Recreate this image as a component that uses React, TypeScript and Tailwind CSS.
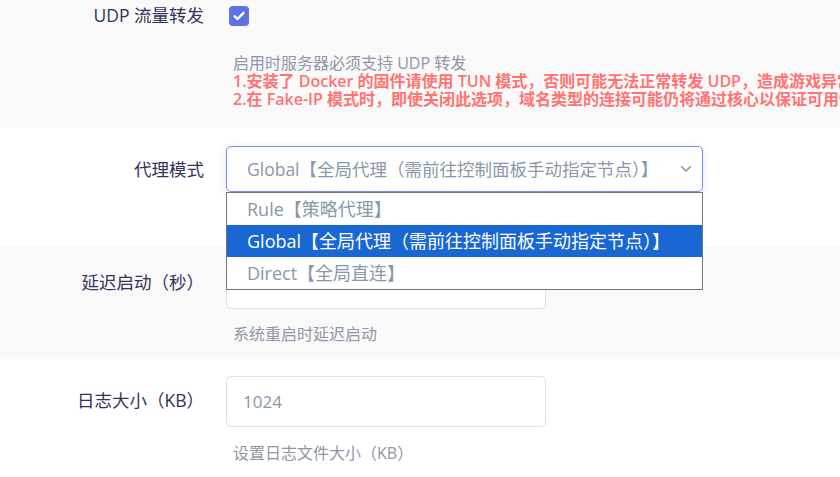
import React from "react";

const font = { fontFamily: '"Open Sans", "Noto Sans CJK SC", sans-serif' };

function Label({ children, top }: { children: React.ReactNode; top: string }) {
  return (
    <div className={`w-[204px] shrink-0 text-right text-[17.5px] leading-[20px] text-[#32325d] whitespace-nowrap ${top}`}>
      {children}
    </div>
  );
}

export default function App() {
  return (
    <div className="w-[840px] h-[477px] overflow-hidden bg-white" style={font}>
      {/* Row 1 */}
      <div className="h-[128px] bg-[#f9f9f9] flex">
        <Label top="pt-[5px]">UDP 流量转发</Label>
        <div className="ml-[25px] flex flex-col min-w-0">
          <div className="mt-[6px] w-[20px] h-[20px] rounded-[4px] bg-[#5e72e4] flex items-center justify-center">
            <svg width="12" height="10" viewBox="0 0 12 10" fill="none">
              <path d="M1.5 5.2 L4.5 8 L10.5 1.8" stroke="white" strokeWidth="2.4" strokeLinecap="round" strokeLinejoin="round" />
            </svg>
          </div>
          <div className="mt-[28px] ml-[4px] text-[16px] leading-[18px] whitespace-nowrap">
            <div className="text-[#8f96a8]">启用时服务器必须支持 UDP 转发</div>
            <div className="text-[#ff7373] font-semibold">
              1.安装了 Docker 的固件请使用 TUN 模式，否则可能无法正常转发 UDP，造成游戏异常
            </div>
            <div className="text-[#ff7373] font-semibold">
              2.在 Fake-IP 模式时，即使关闭此选项，域名类型的连接可能仍将通过核心以保证可用性
            </div>
          </div>
        </div>
      </div>

      {/* Row 2 */}
      <div className="h-[118px] bg-white flex relative z-10">
        <Label top="pt-[31px]">代理模式</Label>
        <div className="ml-[22px] mt-[18px] relative">
          <div className="w-[477px] h-[46px] rounded-[5px] border border-[#7b8cf0] bg-white shadow-[0_2px_10px_rgba(94,114,228,0.18)] flex items-center pl-[20px] pr-[10px] text-[17.5px] text-[#8898aa]">
            <span className="flex-1 whitespace-nowrap overflow-hidden">Global【全局代理（需前往控制面板手动指定节点）】</span>
            <svg width="12" height="8" viewBox="0 0 12 8" fill="none">
              <path d="M1.5 1.5 L6 6 L10.5 1.5" stroke="#8898aa" strokeWidth="1.6" strokeLinecap="round" strokeLinejoin="round" />
            </svg>
          </div>
          <div className="absolute left-0 top-[46px] w-[477px] border border-[#767676] bg-white text-[18px]">
            <div className="h-[32px] flex items-center pl-[20px] text-[#8898aa] whitespace-nowrap">Rule【策略代理】</div>
            <div className="h-[32px] flex items-center pl-[20px] bg-[#1967d2] text-white whitespace-nowrap">
              Global【全局代理（需前往控制面板手动指定节点）】
            </div>
            <div className="h-[32px] flex items-center pl-[20px] text-[#8898aa] whitespace-nowrap">Direct【全局直连】</div>
          </div>
        </div>
      </div>

      {/* Row 3 */}
      <div className="h-[113px] bg-[#f9f9f9] flex">
        <Label top="pt-[26px]">延迟启动（秒）</Label>
        <div className="ml-[22px] mt-[12px] flex flex-col">
          <div className="w-[320px] h-[51px] rounded-[5px] border border-[#dfe1e6] bg-white" />
          <div className="mt-[16px] ml-[7px] text-[16px] leading-[18px] text-[#8f96a8] whitespace-nowrap">系统重启时延迟启动</div>
        </div>
      </div>

      {/* Row 4 */}
      <div className="h-[118px] bg-white flex">
        <Label top="pt-[31px]">日志大小（KB）</Label>
        <div className="ml-[22px] mt-[17px] flex flex-col">
          <div className="w-[320px] h-[51px] rounded-[5px] border border-[#dfe1e6] bg-white flex items-center pl-[16px] text-[17px] text-[#8898aa]">
            1024
          </div>
          <div className="mt-[17px] ml-[7px] text-[16px] leading-[18px] text-[#8f96a8] whitespace-nowrap">设置日志文件大小（KB）</div>
        </div>
      </div>
    </div>
  );
}
